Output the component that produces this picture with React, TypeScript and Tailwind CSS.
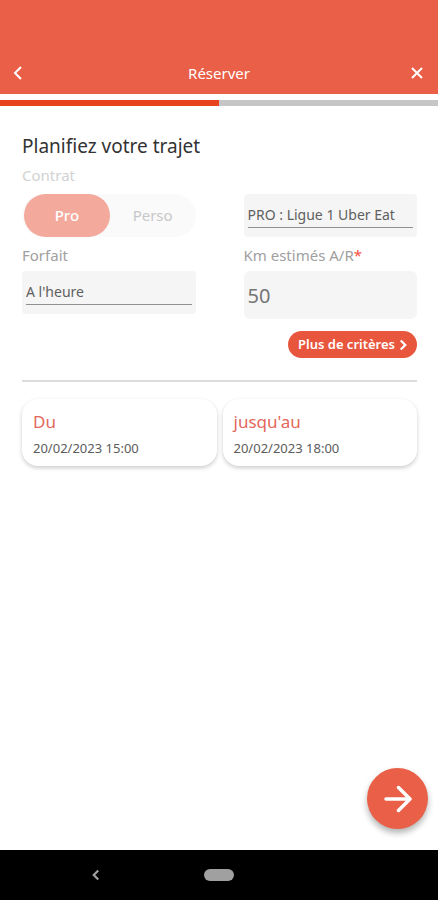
import { useState } from 'react';

const contracts = ['Pro', 'Perso'];

function Chevron({ className, flip = false, width = 2 }: { className: string; flip?: boolean; width?: number }) {
  return (
    <svg viewBox="0 0 10 16" className={className} fill="none" stroke="currentColor" strokeWidth={width} aria-hidden="true">
      <path d={flip ? 'M2 2l6 6-6 6' : 'M8 2L2 8l6 6'} />
    </svg>
  );
}

function Header() {
  return (
    <header className="flex h-[94px] items-end justify-between bg-[#e95f47] px-[13px] pb-[9px] text-white">
      <button type="button" aria-label="Retour" className="flex h-6 w-4 items-center">
        <Chevron className="h-4 w-[10px]" />
      </button>
      <h1 className="text-[15px] leading-6">Réserver</h1>
      <button type="button" aria-label="Fermer" className="flex h-6 w-4 items-center justify-center">
        <svg viewBox="0 0 12 12" className="h-3 w-3" stroke="currentColor" strokeWidth="2" aria-hidden="true">
          <path d="M1 1l10 10M11 1L1 11" />
        </svg>
      </button>
    </header>
  );
}

function ContractToggle() {
  const [contract, setContract] = useState('Pro');
  return (
    <div className="grid h-[43px] grid-cols-2 rounded-full bg-[#fafafa] pl-[2px]">
      {contracts.map((name) => (
        <label
          key={name}
          className="flex cursor-pointer items-center justify-center rounded-full text-[15px] text-[#c8c8c8] has-checked:bg-[#f3a99c] has-checked:font-medium has-checked:text-white"
        >
          <input
            type="radio"
            name="contract"
            value={name}
            checked={contract === name}
            onChange={() => setContract(name)}
            className="sr-only"
          />
          {name}
        </label>
      ))}
    </div>
  );
}

function SelectField({ id, option, label }: { id: string; option: string; label?: string }) {
  return (
    <div className="h-[43px] rounded-sm bg-[#f5f5f5] px-1 pt-2">
      <select
        id={id}
        aria-label={label}
        className="block h-[26px] w-full appearance-none border-b border-[#909090] bg-transparent text-sm text-[#606060] outline-none"
      >
        <option>{option}</option>
      </select>
    </div>
  );
}

function DateCard({ title, value }: { title: string; value: string }) {
  return (
    <button
      type="button"
      className="rounded-2xl bg-white px-[11px] pt-[11px] pb-2 text-left shadow-[0_2px_4px_rgba(0,0,0,0.2)]"
    >
      <span className="block text-[17px] leading-6 text-[#e4675a]">{title}</span>
      <span className="mt-1 block text-[13px] leading-5 text-[#5c5c5c]">{value}</span>
    </button>
  );
}

export default function App() {
  return (
    <div className="flex min-h-screen flex-col bg-white font-['Noto_Sans','Open_Sans',sans-serif]">
      <Header />
      <div role="progressbar" aria-label="Étape" aria-valuenow={50} className="mt-[6px] h-[6px] bg-[#c6c6c6]">
        <div className="h-full w-1/2 bg-[#e8431f]" />
      </div>

      <main className="flex-1 pt-7 pr-[21px] pl-[22px]">
        <h2 className="text-[19px] leading-6 text-[#333333]">Planifiez votre trajet</h2>
        <p className="mt-[5px] text-[15px] leading-6 text-[#d2d2d2]">Contrat</p>
        <div className="mt-[7px] grid grid-cols-2 gap-x-12">
          <ContractToggle />
          <SelectField id="contract-name" label="Nom du contrat" option="PRO : Ligue 1 Uber Eat" />
          <div>
            <label htmlFor="plan" className="mt-[6px] mb-1 block text-[15px] leading-6 text-[#a0a0a0]">
              Forfait
            </label>
            <SelectField id="plan" option="A l'heure" />
          </div>
          <div>
            <label htmlFor="distance" className="mt-[6px] mb-1 block text-[15px] leading-6 text-[#a0a0a0]">
              Km estimés A/R<span className="text-[#f5503c]">*</span>
            </label>
            <input
              id="distance"
              inputMode="numeric"
              defaultValue="50"
              className="block h-12 w-full rounded-md bg-[#f5f5f5] px-1 text-xl text-[#757575] outline-none"
            />
          </div>
        </div>

        <div className="mt-3 flex justify-end">
          <button
            type="button"
            className="flex h-[27px] items-center gap-1 rounded-full bg-[#e8573d] px-[10px] text-[13px] font-semibold text-white"
          >
            Plus de critères
            <Chevron className="h-3 w-2" flip width={3} />
          </button>
        </div>

        <hr className="mt-[22px] border-t-2 border-[#dcdcdc]" />

        <div className="mt-[17px] grid grid-cols-2 gap-[6px]">
          <DateCard title="Du" value="20/02/2023 15:00" />
          <DateCard title="jusqu'au" value="20/02/2023 18:00" />
        </div>
      </main>

      <div className="flex justify-end px-[10px] pb-[21px]">
        <button
          type="button"
          aria-label="Continuer"
          className="flex h-[61px] w-[61px] items-center justify-center rounded-full bg-[#e95f47] text-white shadow-[0_4px_6px_rgba(0,0,0,0.3)]"
        >
          <svg
            viewBox="0 0 28 28"
            className="h-7 w-7"
            fill="none"
            stroke="currentColor"
            strokeWidth="3.5"
            strokeLinecap="round"
            strokeLinejoin="round"
            aria-hidden="true"
          >
            <path d="M2 14h24M14.500 2.500L26 14 14.500 25.500" />
          </svg>
        </button>
      </div>

      <nav aria-label="Système" className="grid h-[50px] grid-cols-3 items-center bg-black text-[#a0a0a0]">
        <button type="button" aria-label="Précédent" className="flex justify-end pr-[46px]">
          <Chevron className="h-3 w-2" width={3} />
        </button>
        <button type="button" aria-label="Accueil" className="h-3 w-[30px] justify-self-center rounded-full bg-[#a0a0a0]" />
      </nav>
    </div>
  );
}
